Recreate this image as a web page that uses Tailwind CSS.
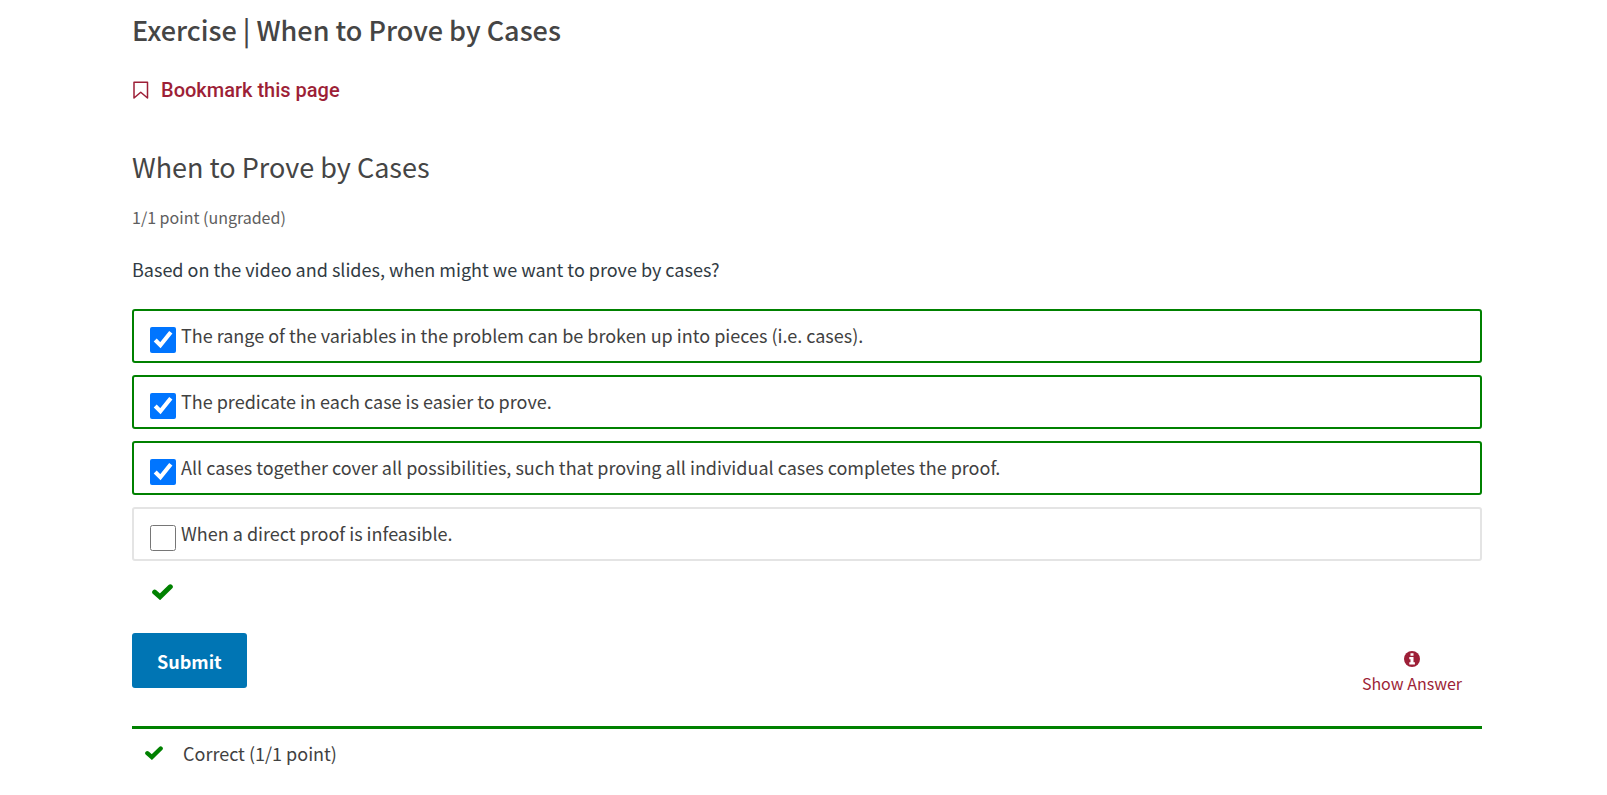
<!DOCTYPE html>
<html lang="en">
<head>
<meta charset="utf-8">
<meta name="viewport" content="width=device-width, initial-scale=1">
<title>Exercise | When to Prove by Cases</title>
<script src="https://cdn.jsdelivr.net/npm/@tailwindcss/browser@4"></script>
</head>
<body class="bg-white font-['Noto_Sans_CJK_SC',sans-serif] text-[18px] leading-7 text-[#414141]">
<main class="pt-[10px] pr-[125px] pl-[132px]">
  <h1 class="text-[27px] leading-10 font-medium text-[#454545]">Exercise | When to Prove by Cases</h1>
  <button type="button" class="mt-[26px] flex items-center gap-3 font-['Roboto',sans-serif] text-[20px] leading-7 font-medium text-[#9d1f37]">
    <svg class="h-[18px] w-[17px]" viewBox="0 0 17 18" fill="none" stroke="currentColor" stroke-width="1.5" stroke-linejoin="round" aria-hidden="true"><path d="M2 1.200h13.500v15.800L8.750 11.200 2 17z"/></svg>
    Bookmark this page
  </button>
  <h2 class="mt-[43px] text-[27px] leading-10 text-[#454545]">When to Prove by Cases</h2>
  <p class="mt-[18px] text-[16px] leading-6 text-[#5e5e5e]">1/1 point (ungraded)</p>
  <form class="pt-[26px]">
    <fieldset>
      <legend class="mb-[26px] text-[#313b43]">Based on the video and slides, when might we want to prove by cases?</legend>
      <div class="flex flex-col gap-3">
        <label class="flex min-h-[54px] items-start gap-[5px] rounded-[3px] border-2 border-[#008100] px-4 pt-[10px]"><input type="checkbox" checked class="mt-[6px] size-[26px] shrink-0"><span>The range of the variables in the problem can be broken up into pieces (i.e. cases).</span></label>
        <label class="flex min-h-[54px] items-start gap-[5px] rounded-[3px] border-2 border-[#008100] px-4 pt-[10px]"><input type="checkbox" checked class="mt-[6px] size-[26px] shrink-0"><span>The predicate in each case is easier to prove.</span></label>
        <label class="flex min-h-[54px] items-start gap-[5px] rounded-[3px] border-2 border-[#008100] px-4 pt-[10px]"><input type="checkbox" checked class="mt-[6px] size-[26px] shrink-0"><span>All cases together cover all possibilities, such that proving all individual cases completes the proof.</span></label>
        <label class="flex min-h-[54px] items-start gap-[5px] rounded-[3px] border-2 border-[#e4e4e4] px-4 pt-[10px]"><input type="checkbox" class="mt-[6px] size-[26px] shrink-0"><span>When a direct proof is infeasible.</span></label>
      </div>
    </fieldset>
    <svg class="mt-[23px] ml-5 h-4 w-[21px]" viewBox="0 0 21 16" aria-label="Correct" role="img"><path d="M2.700 8.200l5.300 4.600L18.300 2.800" fill="none" stroke="#008100" stroke-width="5" stroke-linejoin="miter" stroke-linecap="round"/></svg>
    <div class="mt-[33px] flex items-start justify-between">
      <button type="button" class="h-[55px] rounded-[3px] bg-[#0075b4] px-[25px] font-bold text-white">Submit</button>
      <button type="button" class="mt-[18px] mr-5 flex flex-col items-center text-[16px] leading-6 text-[#9d1f37]">
        <svg class="mb-1 size-4" viewBox="0 0 16 16" aria-hidden="true"><circle cx="8" cy="8" r="8" fill="currentColor"/><path d="M6.500 2.200h3v2.500h-3zM5.300 6h4.200v5.300h1.400v2.200H5.300v-2.200h1.200V8.200H5.300z" fill="#fff"/></svg>
        Show Answer
      </button>
    </div>
  </form>
  <div class="mt-[31px] flex items-center border-t-3 border-[#008100] pt-[10px] pl-[13px]">
    <svg class="h-[14px] w-[18px]" viewBox="0 0 21 16" aria-hidden="true"><path d="M2.700 8.200l5.300 4.600L18.300 2.800" fill="none" stroke="#008100" stroke-width="5" stroke-linecap="round"/></svg>
    <p class="ml-5 text-[#414141]">Correct (1/1 point)</p>
  </div>
</main>
</body>
</html>
